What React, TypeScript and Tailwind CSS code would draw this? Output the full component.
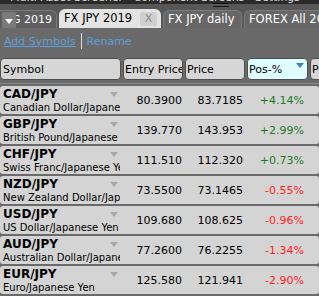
import React from "react";

type Row = { sym: string; name: string; entry: string; price: string; pos: string; up: boolean };

const rows: Row[] = [
  { sym: "CAD/JPY", name: "Canadian Dollar/Japanese Yen", entry: "80.3900", price: "83.7185", pos: "+4.14%", up: true },
  { sym: "GBP/JPY", name: "British Pound/Japanese Yen", entry: "139.770", price: "143.953", pos: "+2.99%", up: true },
  { sym: "CHF/JPY", name: "Swiss Franc/Japanese Yen", entry: "111.510", price: "112.320", pos: "+0.73%", up: true },
  { sym: "NZD/JPY", name: "New Zealand Dollar/Japanese Yen", entry: "73.5500", price: "73.1465", pos: "-0.55%", up: false },
  { sym: "USD/JPY", name: "US Dollar/Japanese Yen", entry: "109.680", price: "108.625", pos: "-0.96%", up: false },
  { sym: "AUD/JPY", name: "Australian Dollar/Japanese Yen", entry: "77.2600", price: "76.2255", pos: "-1.34%", up: false },
  { sym: "EUR/JPY", name: "Euro/Japanese Yen", entry: "125.580", price: "121.941", pos: "-2.90%", up: false },
];

function Tri({ color, cls }: { color: string; cls: string }) {
  return (
    <svg className={cls} width="8" height="5" viewBox="0 0 8 5">
      <path d="M0 0 L8 0 L4 5 Z" fill={color} />
    </svg>
  );
}

export default function App() {
  return (
    <div className="relative w-[319px] h-[296px] overflow-hidden bg-[#6a6a6a] font-['DejaVu_Sans',sans-serif] leading-none">
      {/* top band */}
      <div className="h-[4px] bg-[#2a2a2a] overflow-hidden">
        <div className="mt-[-8px] pl-[10px] text-[11px] text-[#d8d8d8] whitespace-nowrap">
          Multi Asset Screener · Component Screens · Settings
        </div>
      </div>
      <div className="absolute left-[213px] top-[3px] w-[16px] h-[4px] border-t border-b border-[#111]" />

      {/* tab strip */}
      <div className="h-[24px] bg-[#575757] flex items-end gap-[2px] whitespace-nowrap">
        <div className="relative w-[57px] h-[18px] shrink-0 bg-[#5e5e5e] rounded-tr-[6px] border-t border-r border-[#7a7a7a] overflow-hidden flex items-center justify-end pr-[4px] text-[11px] text-white">
          NG 2019
          <div className="absolute left-[2px] top-[1px] w-[14px] h-[19px] bg-[#7a7a7a] flex items-center justify-center rounded-[2px]">
            <Tri color="#ffffff" cls="" />
          </div>
        </div>
        <div className="w-[102px] h-[19px] shrink-0 bg-[#e4e4e4] rounded-t-[6px] flex items-center pl-[5px] text-[11.5px] text-black">
          <span>FX JPY 2019</span>
          <span className="ml-auto mr-[4px] w-[17px] h-[14px] bg-[#cfcfcf] rounded-[2px] flex items-center justify-center text-[11px] text-[#8a8a8a]">X</span>
        </div>
        <div className="w-[79px] h-[18px] shrink-0 bg-[#666] rounded-t-[6px] border border-b-0 border-[#7c7c7c] flex items-center pl-[4px] text-[11.5px] text-white">
          FX JPY daily
        </div>
        <div className="w-[90px] h-[18px] shrink-0 bg-[#666] rounded-t-[6px] border border-b-0 border-[#7c7c7c] flex items-center pl-[4px] text-[11.5px] text-white overflow-hidden">
          FOREX All 2019
        </div>
      </div>

      {/* toolbar */}
      <div className="h-[30px] flex items-center pl-[4px] pb-[4px] text-[11px] text-[#5f9fd8]">
        <span className="underline">Add Symbols</span>
        <span className="mx-[5px] w-px h-[16px] bg-[#dcdcdc]" />
        <span>Rename</span>
      </div>

      {/* header */}
      <div className="flex gap-[2px] text-[11px] text-black">
        <div className="w-[121px] h-[22px] shrink-0 bg-[#d6d6d6] border border-[#4e4e4e] rounded-[4px] flex items-center pl-[2px]">Symbol</div>
        <div className="w-[60px] h-[22px] shrink-0 bg-[#d6d6d6] border border-[#4e4e4e] rounded-[4px] flex items-center pl-[1px] overflow-hidden whitespace-nowrap">Entry Price</div>
        <div className="w-[60px] h-[22px] shrink-0 bg-[#d6d6d6] border border-[#4e4e4e] rounded-[4px] flex items-center pl-[1px]">Price</div>
        <div className="relative w-[61px] h-[22px] shrink-0 bg-[#dffcff] border border-[#4e4e4e] rounded-[4px] flex items-center pl-[1px]">
          Pos-%
          <Tri color="#3d7fc4" cls="absolute right-[3px] top-[4px]" />
        </div>
        <div className="w-[30px] h-[22px] shrink-0 bg-[#d6d6d6] border border-[#4e4e4e] rounded-[4px] flex items-center pl-[1px] overflow-hidden">Pr</div>
      </div>

      <div className="mt-[3px] h-px bg-[#8a8a8a]" />

      {/* rows */}
      <div className="mt-[2px] flex flex-col gap-[2px]">
        {rows.map((r) => (
          <div key={r.sym} className="h-[28px] bg-[#d4d4d4] rounded-[3px] flex items-center text-black">
            <div className="relative w-[122px] h-full shrink-0 pl-[3px] pt-[2px] overflow-hidden whitespace-nowrap">
              <div className="text-[12px] font-bold">{r.sym}</div>
              <div className="mt-[3px] w-[117px] overflow-hidden text-[10px]">{r.name}</div>
              <Tri color="#a8a8a8" cls="absolute left-[110px] top-[6px]" />
            </div>
            <div className="w-[61px] shrink-0 text-right text-[11px] pr-[1px]">{r.entry}</div>
            <div className="w-[61px] shrink-0 text-right text-[11px] pr-[1px]">{r.price}</div>
            <div className={`w-[61px] shrink-0 text-right text-[11px] pr-[1px] ${r.up ? "text-[#1f7a1f]" : "text-[#ff1f1f]"}`}>{r.pos}</div>
          </div>
        ))}
      </div>
    </div>
  );
}
